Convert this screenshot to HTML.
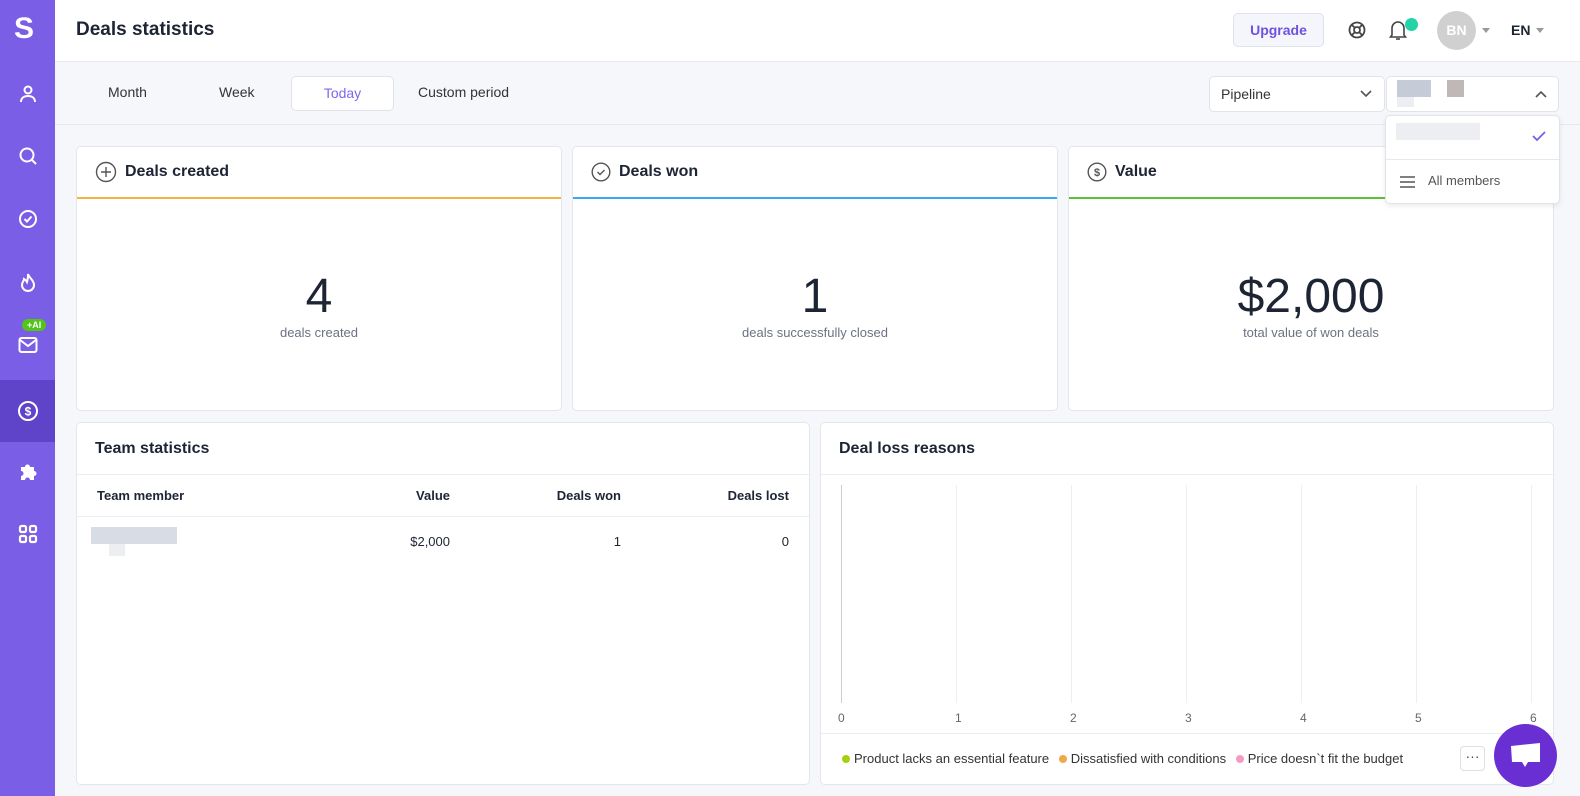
<!DOCTYPE html>
<html><head><meta charset="utf-8"><style>
*{box-sizing:border-box;margin:0;padding:0}
body{width:1580px;height:796px;overflow:hidden;background:#f6f7fb;font-family:"Liberation Sans",Arial,sans-serif;color:#1d2433;position:relative}
.side{position:absolute;left:0;top:0;width:55px;height:796px;background:#7b5ee6}
.side .it{position:absolute;left:0;width:55px;height:60px;display:flex;align-items:center;justify-content:center}
.top{position:absolute;left:55px;top:0;right:0;height:62px;background:#fff;border-bottom:1px solid #e8eaf0}
.abs{position:absolute}
.card{position:absolute;background:#fff;border:1px solid #e4e6ec;border-radius:5px;overflow:hidden}
.ch{height:52px;display:flex;align-items:center;padding-left:18px;font-weight:bold;font-size:16px;gap:8px}
.big{position:absolute;left:0;right:0;text-align:center;top:270px;font-size:48px;color:#1d2433}
.sub{position:absolute;left:0;right:0;text-align:center;font-size:13px;color:#6b7280}
.sel{position:absolute;background:#fff;border:1px solid #e1e3ea;border-radius:5px;height:36px}
.blk{position:absolute;background:#d6dbe4}
</style></head><body>
<div class="side">
 <div class="abs" style="left:14px;top:12px;color:#fff;font-size:30px;font-weight:bold">S</div>
 <div class="it" style="top:64px"><svg width="20" height="20" viewBox="0 0 20 20" fill="none" stroke="#fff" stroke-width="2"><circle cx="10" cy="6" r="3.5"/><path d="M3 18c0-4 3-6 7-6s7 2 7 6"/></svg></div>
 <div class="it" style="top:126px"><svg width="20" height="20" viewBox="0 0 20 20" fill="none" stroke="#fff" stroke-width="2"><circle cx="9" cy="9" r="6.5"/><path d="M14 14l4 4"/></svg></div>
 <div class="it" style="top:189px"><svg width="20" height="20" viewBox="0 0 20 20" fill="none" stroke="#fff" stroke-width="2"><circle cx="10" cy="10" r="8"/><path d="M6.5 10l2.5 2.5 4.5-5"/></svg></div>
 <div class="it" style="top:252px"><svg width="20" height="20" viewBox="0 0 20 20" fill="none" stroke="#fff" stroke-width="2"><path d="M10 2c1 4 6 6 6 11a6 6 0 01-12 0c0-3 2-4 2-6 2 1 3 3 3 3 1-3 1-5 1-8z"/></svg></div>
 <div class="abs" style="left:22px;top:319px;background:#52c41a;color:#fff;font-size:9px;font-weight:bold;border-radius:7px;padding:1px 5px">+AI</div>
 <div class="it" style="top:315px"><svg width="20" height="18" viewBox="0 0 20 18" fill="none" stroke="#fff" stroke-width="2"><rect x="1.5" y="2" width="17" height="14" rx="2"/><path d="M2 4l8 6 8-6"/></svg></div>
 <div class="it" style="top:380px;height:62px;background:#5f43c9"><svg width="22" height="22" viewBox="0 0 22 22" fill="none" stroke="#fff" stroke-width="2"><circle cx="11" cy="11" r="9"/><text x="11" y="15.5" text-anchor="middle" font-size="12" font-weight="bold" fill="#fff" stroke="none" font-family="Liberation Sans">$</text></svg></div>
 <div class="it" style="top:442px"><svg width="20" height="20" viewBox="0 0 20 20" fill="#fff"><path d="M3 5h4a2.5 2.5 0 015 0h4v4a2.5 2.5 0 010 5v4h-4a2.5 2.5 0 00-5 0H3v-4a2.5 2.5 0 000-5z"/></svg></div>
 <div class="it" style="top:504px"><svg width="20" height="20" viewBox="0 0 20 20" fill="none" stroke="#fff" stroke-width="2.2"><rect x="2" y="2" width="6" height="6" rx="1.5"/><rect x="12" y="2" width="6" height="6" rx="1.5"/><rect x="2" y="12" width="6" height="6" rx="1.5"/><rect x="12" y="12" width="6" height="6" rx="1.5"/></svg></div>
</div>
<div class="top">
 <div class="abs" style="left:21px;top:19px;font-size:19px;font-weight:bold">Deals statistics</div>
 <div class="abs" style="left:1178px;top:13px;width:91px;height:34px;background:#f5f6fc;border:1px solid #dfe2ec;border-radius:5px;color:#6f52e0;font-weight:bold;font-size:14px;text-align:center;line-height:32px">Upgrade</div>
 <svg class="abs" style="left:1293px;top:21px" width="18" height="18" viewBox="0 0 18 18" fill="none" stroke="#444" stroke-width="1.8"><circle cx="9" cy="9" r="7.5"/><circle cx="9" cy="9" r="3"/><path d="M4 4l3 3M14 4l-3 3M4 14l3-3M14 14l-3-3"/></svg>
 <svg class="abs" style="left:1333px;top:19px" width="20" height="22" viewBox="0 0 20 22" fill="none" stroke="#444" stroke-width="1.6"><path d="M4 16V9a6 6 0 0112 0v7l1.5 2h-15z"/><path d="M8 20h4"/></svg>
 <div class="abs" style="left:1350px;top:18px;width:13px;height:13px;border-radius:50%;background:#21d3a7"></div>
 <div class="abs" style="left:1382px;top:11px;width:39px;height:39px;border-radius:50%;background:#d0d0d0;color:#fff;font-weight:bold;font-size:14px;text-align:center;line-height:39px">BN</div>
 <div class="abs" style="left:1427px;top:28px;border:4px solid transparent;border-top:5px solid #999"></div>
 <div class="abs" style="left:1456px;top:22px;font-weight:bold;font-size:14px">EN</div>
 <div class="abs" style="left:1481px;top:28px;border:4px solid transparent;border-top:5px solid #999"></div>
</div>
<div class="abs" style="left:55px;top:124px;right:0;border-top:1px solid #e6e8ee"></div>
<div class="abs" style="left:108px;top:84px;font-size:14px;color:#333">Month</div>
<div class="abs" style="left:219px;top:84px;font-size:14px;color:#333">Week</div>
<div class="abs" style="left:291px;top:76px;width:103px;height:35px;background:#fff;border:1px solid #e1e3ea;border-radius:5px;text-align:center;line-height:33px;font-size:14px;color:#7b68ee">Today</div>
<div class="abs" style="left:418px;top:84px;font-size:14px;color:#333">Custom period</div>
<div class="sel" style="left:1209px;top:76px;width:176px"><span class="abs" style="left:11px;top:9px;font-size:14px;color:#333">Pipeline</span><svg class="abs" style="left:150px;top:13px" width="12" height="8" viewBox="0 0 12 8" fill="none" stroke="#555" stroke-width="1.6"><path d="M1 1l5 5 5-5"/></svg></div>
<div class="sel" style="left:1386px;top:76px;width:173px"><div class="blk" style="left:10px;top:3px;width:34px;height:17px;background:#c5ccd8"></div><div class="blk" style="left:60px;top:3px;width:17px;height:17px;background:#c0b8b8"></div><div class="blk" style="left:10px;top:20px;width:17px;height:10px;background:#eceef2"></div><svg class="abs" style="left:148px;top:13px" width="12" height="8" viewBox="0 0 12 8" fill="none" stroke="#555" stroke-width="1.6"><path d="M1 7l5-5 5 5"/></svg></div>
<div class="card" style="left:76px;top:146px;width:486px;height:265px"><div class="ch" style="border-bottom:2px solid #f5b342"><svg width="22" height="22" viewBox="0 0 22 22" fill="none" stroke="#555" stroke-width="1.4"><circle cx="11" cy="11" r="9.5"/><path d="M11 6v10M6 11h10"/></svg>Deals created</div><div class="big" style="top:122px">4</div><div class="sub" style="top:178px">deals created</div></div>
<div class="card" style="left:572px;top:146px;width:486px;height:265px"><div class="ch" style="border-bottom:2px solid #3ba8f0"><svg width="20" height="20" viewBox="0 0 20 20" fill="none" stroke="#555" stroke-width="1.4"><circle cx="10" cy="10" r="8.8"/><path d="M6.5 10l2.5 2.5 4.5-4.5"/></svg>Deals won</div><div class="big" style="top:122px">1</div><div class="sub" style="top:178px">deals successfully closed</div></div>
<div class="card" style="left:1068px;top:146px;width:486px;height:265px"><div class="ch" style="border-bottom:2px solid #5ac13a"><svg width="20" height="20" viewBox="0 0 20 20" fill="none" stroke="#555" stroke-width="1.4"><circle cx="10" cy="10" r="8.8"/><text x="10" y="14" text-anchor="middle" font-size="11" fill="#555" stroke="none" font-family="Liberation Sans">$</text></svg>Value</div><div class="big" style="top:122px">$2,000</div><div class="sub" style="top:178px">total value of won deals</div></div>
<div class="abs" style="left:1385px;top:115px;width:175px;height:89px;background:#fff;border:1px solid #e1e3ea;border-radius:5px;box-shadow:0 2px 6px rgba(0,0,0,.08)">
 <div class="blk" style="left:10px;top:7px;width:84px;height:17px;background:#eceef2"></div>
 <svg class="abs" style="left:146px;top:15px" width="14" height="10" viewBox="0 0 14 10" fill="none" stroke="#7b5ee6" stroke-width="1.8"><path d="M1 5l4 4 8-8"/></svg>
 <div class="abs" style="left:0;right:0;top:43px;border-top:1px solid #e6e8ee"></div>
 <svg class="abs" style="left:14px;top:60px" width="15" height="12" viewBox="0 0 15 12" stroke="#555" stroke-width="1.5"><path d="M0 1h15M0 6h15M0 11h15"/></svg>
 <div class="abs" style="left:42px;top:57px;font-size:13px;color:#555">All members</div>
</div>
<div class="card" style="left:76px;top:422px;width:734px;height:363px">
 <div class="ch" style="height:52px;border-bottom:1px solid #ebedf2">Team statistics</div>
 <div style="height:42px;border-bottom:1px solid #ebedf2;position:relative;font-size:13px;font-weight:bold">
  <span class="abs" style="left:20px;top:13px">Team member</span><span class="abs" style="right:359px;top:13px">Value</span><span class="abs" style="right:188px;top:13px">Deals won</span><span class="abs" style="right:20px;top:13px">Deals lost</span>
 </div>
 <div style="position:relative;height:50px;font-size:13px">
  <div class="blk" style="left:14px;top:10px;width:86px;height:17px;background:#d8dce5"></div><div class="blk" style="left:32px;top:27px;width:16px;height:12px;background:#eceef2"></div>
  <span class="abs" style="right:359px;top:17px">$2,000</span><span class="abs" style="right:188px;top:17px">1</span><span class="abs" style="right:20px;top:17px">0</span>
 </div>
</div>
<div class="card" style="left:820px;top:422px;width:734px;height:363px">
 <div class="ch" style="height:52px;border-bottom:1px solid #ebedf2">Deal loss reasons</div>
 <div class="abs" style="left:20px;top:62px;width:1px;height:218px;background:#c8ccd6"></div>
 <div class="abs" style="left:135px;top:62px;width:1px;height:218px;background:#eceef2"></div>
 <div class="abs" style="left:250px;top:62px;width:1px;height:218px;background:#eceef2"></div>
 <div class="abs" style="left:365px;top:62px;width:1px;height:218px;background:#eceef2"></div>
 <div class="abs" style="left:480px;top:62px;width:1px;height:218px;background:#eceef2"></div>
 <div class="abs" style="left:595px;top:62px;width:1px;height:218px;background:#eceef2"></div>
 <div class="abs" style="left:710px;top:62px;width:1px;height:218px;background:#eceef2"></div>
 <div class="abs" style="top:288px;left:17px;font-size:12px;color:#666;width:720px">
  <span class="abs" style="left:0">0</span><span class="abs" style="left:117px">1</span><span class="abs" style="left:232px">2</span><span class="abs" style="left:347px">3</span><span class="abs" style="left:462px">4</span><span class="abs" style="left:577px">5</span><span class="abs" style="left:692px">6</span>
 </div>
 <div class="abs" style="left:0;right:0;top:310px;border-top:1px solid #ebedf2"></div>
 <div class="abs" style="left:21px;top:328px;font-size:13px;color:#333;white-space:nowrap">
  <span style="display:inline-block;width:8px;height:8px;border-radius:50%;background:#a3d10f;margin-right:4px"></span>Product lacks an essential feature
  <span style="display:inline-block;width:8px;height:8px;border-radius:50%;background:#f0a848;margin:0 4px 0 6px"></span>Dissatisfied with conditions
  <span style="display:inline-block;width:8px;height:8px;border-radius:50%;background:#f59ac4;margin:0 4px 0 6px"></span>Price doesn`t fit the budget
 </div>
 <div class="abs" style="left:639px;top:323px;width:25px;height:25px;border:1px solid #dcdfe6;border-radius:4px;text-align:center;line-height:18px;font-size:14px;color:#444">···</div>
</div>
<div class="abs" style="left:1494px;top:724px;width:63px;height:63px;border-radius:50%;background:#6a2fd3">
 <svg class="abs" style="left:17px;top:19px" width="30" height="27" viewBox="0 0 30 27" fill="#fff"><path d="M0 3l29-3v19H17l-3 5-3-5H1z"/></svg>
</div>
</body></html>
